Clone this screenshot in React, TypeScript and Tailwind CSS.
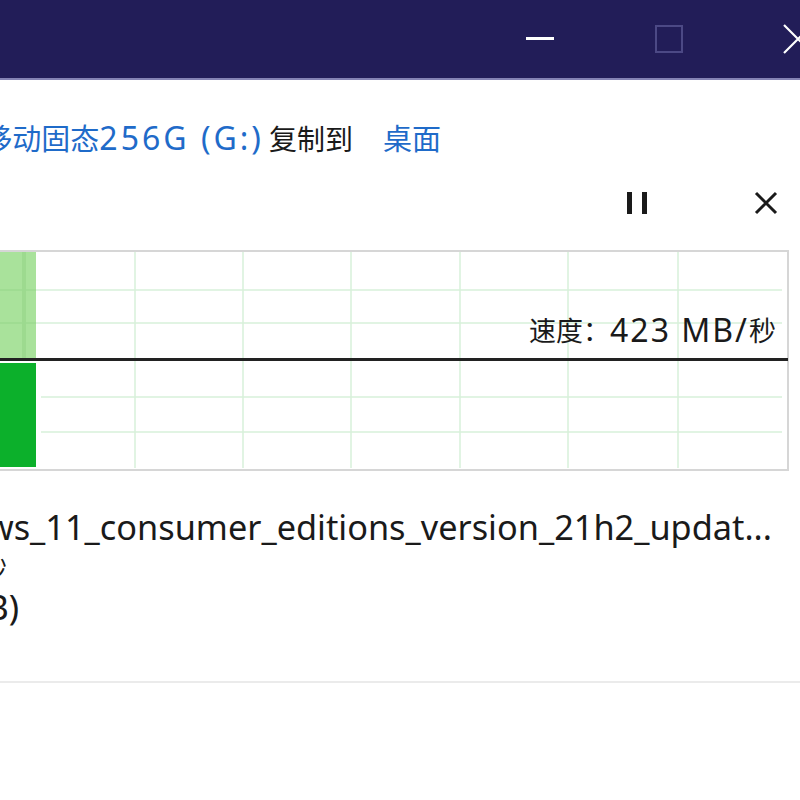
import React from "react";

const FONT = '"Noto Sans", "Noto Sans CJK SC", sans-serif';
const CJK = '"Noto Sans CJK SC", sans-serif';

function C({ s, children }: { s: string; children: React.ReactNode }) {
  return (
    <span className={s} style={{ fontFamily: CJK }}>
      {children}
    </span>
  );
}

function Chart() {
  const vx = [27, 135, 243, 351, 460, 568, 678];
  const grid = "#d7f1da";
  return (
    <div className="relative w-[790px] h-[224px] mt-[25px]">
      <svg width="790" height="224" viewBox="0 0 790 224" className="block">
        <rect x="-10" y="3" width="798" height="219" fill="#ffffff" stroke="#d6d6d6" strokeWidth="2" />
        <rect x="0" y="4" width="36" height="106" fill="#a9e29b" />
        <rect x="22" y="4" width="4" height="106" fill="#9dda8f" />
        <rect x="0" y="115" width="36" height="104" fill="#0cb02b" />
        {vx.map((x) =>
          x > 36 ? (
            <g key={x}>
              <line x1={x} y1="4" x2={x} y2="110" stroke={grid} strokeWidth="1.5" />
              <line x1={x} y1="113" x2={x} y2="220" stroke={grid} strokeWidth="1.5" />
            </g>
          ) : null
        )}
        <line x1="36" y1="42" x2="782" y2="42" stroke={grid} strokeWidth="1.5" />
        <line x1="36" y1="75" x2="782" y2="75" stroke={grid} strokeWidth="1.5" />
        <line x1="0" y1="42" x2="36" y2="42" stroke="#9dda8f" strokeWidth="1.5" />
        <line x1="0" y1="75" x2="36" y2="75" stroke="#9dda8f" strokeWidth="1.5" />
        <line x1="41" y1="149" x2="782" y2="149" stroke={grid} strokeWidth="1.5" />
        <line x1="41" y1="184" x2="782" y2="184" stroke={grid} strokeWidth="1.5" />
        <rect x="0" y="110" width="788" height="3" fill="#222222" />
      </svg>
      <div className="absolute right-[14px] top-[62px] h-[40px] flex items-center text-[32px] text-[#1a1a1a] whitespace-nowrap">
        <C s="text-[27px]">速度：</C>
        <span className="tracking-[2px]">423 MB/</span>
        <C s="text-[27px]">秒</C>
      </div>
    </div>
  );
}

function RightLine({ w, children }: { w: string; children: React.ReactNode }) {
  return (
    <div className={`flex justify-end h-[40px] items-center ${w}`}>
      <span className="shrink-0 whitespace-nowrap flex items-center">{children}</span>
    </div>
  );
}

export default function App() {
  return (
    <div
      className="w-[800px] h-[800px] bg-white overflow-hidden text-[#1a1a1a]"
      style={{ fontFamily: FONT }}
    >
      {/* title bar */}
      <div className="h-[80px] bg-[#221d58] border-b-2 border-[#8583b4] overflow-hidden">
        <div className="w-[862px] h-[78px] flex justify-end items-center">
          <div className="w-[129px] h-full flex items-center justify-center">
            <svg width="28" height="4"><rect x="0" y="0" width="28" height="3" fill="#ffffff" /></svg>
          </div>
          <div className="w-[129px] h-full flex items-center justify-center">
            <svg width="28" height="28"><rect x="1" y="1" width="26" height="26" fill="none" stroke="#4c4985" strokeWidth="2" /></svg>
          </div>
          <div className="w-[129px] h-full flex items-center justify-center">
            <svg width="30" height="30">
              <path d="M1 1 L29 29 M29 1 L1 29" stroke="#ffffff" strokeWidth="2.2" />
            </svg>
          </div>
        </div>
      </div>

      {/* header */}
      <div className="mt-[38px] text-[32px]">
        <RightLine w="w-[441px]">
          <C s="text-[29px]">正在将</C>&nbsp;1&nbsp;<C s="text-[29px]">个项目从</C>&nbsp;
          <span className="text-[#1f6bc9] flex items-center">
            <C s="text-[29px]">移动固态</C>
            <span className="tracking-[3px]">256G (G:)</span>
          </span>
          <C s="text-[28px] ml-[5px]">复制到</C>
          <C s="text-[29px] ml-[30px] text-[#1f6bc9]">桌面</C>
        </RightLine>
      </div>

      {/* controls */}
      <div className="mt-[25px] h-[40px] flex justify-end items-center gap-[89px] pr-[14px]">
        <div className="w-[40px] h-[40px] flex items-center justify-center">
          <svg width="22" height="24">
            <rect x="1" y="1" width="5" height="22" fill="#1a1a1a" />
            <rect x="16" y="1" width="5" height="22" fill="#1a1a1a" />
          </svg>
        </div>
        <div className="w-[40px] h-[40px] flex items-center justify-center">
          <svg width="24" height="24">
            <path d="M2 2 L22 22 M22 2 L2 22" stroke="#1a1a1a" strokeWidth="3" />
          </svg>
        </div>
      </div>

      <Chart />

      {/* details */}
      <div className="mt-[35px] text-[34.3px]">
        <RightLine w="w-[772px]">
          <C s="text-[27px]">名称：</C>windows_11_consumer_editions_version_21h2_updat...
        </RightLine>
        <RightLine w="w-[7px]">
          <C s="text-[27px]">剩余时间：大约</C>&nbsp;10&nbsp;<C s="text-[27px]">秒</C>
        </RightLine>
        <RightLine w="w-[19px]">
          <C s="text-[27px]">剩余项目：</C>1 (5.09 GB)
        </RightLine>
      </div>

      <div className="mt-[54px] h-[2px] bg-[#ebebeb]" />
    </div>
  );
}
